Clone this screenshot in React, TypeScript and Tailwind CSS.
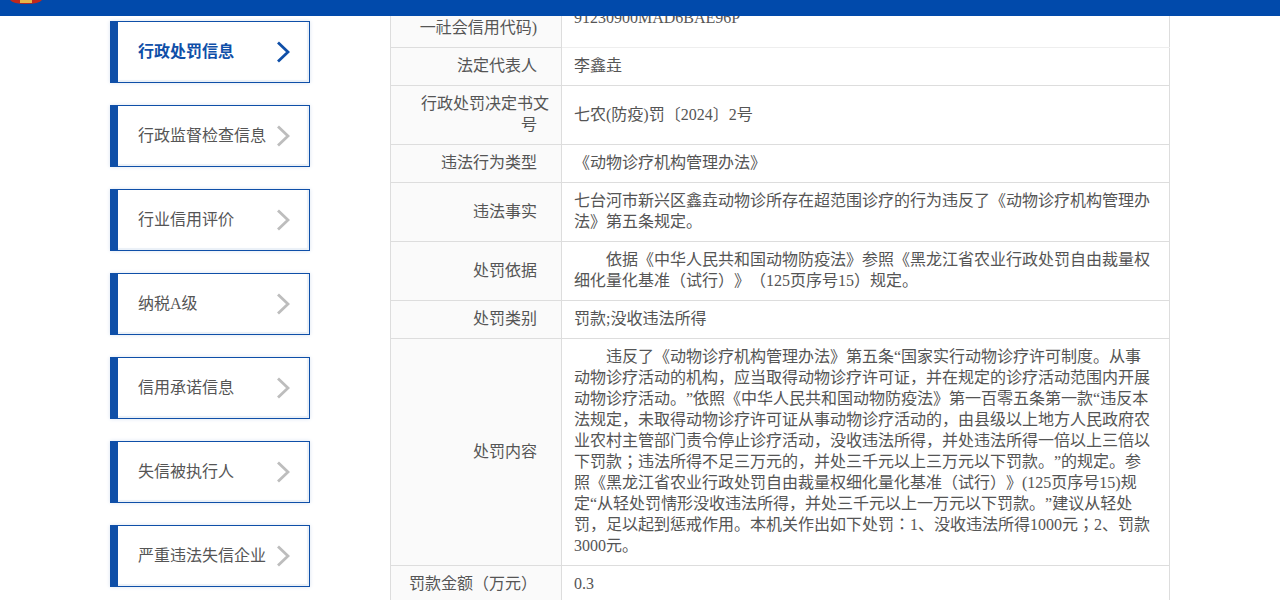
import React from "react";

const nav = ["行政处罚信息", "行政监督检查信息", "行业信用评价", "纳税A级", "信用承诺信息", "失信被执行人", "严重违法失信企业"];

const rows: [string, React.ReactNode][] = [
  ["行政相对人代码(统一社会信用代码)", "91230900MAD6BAE96P"],
  ["法定代表人", "李鑫垚"],
  ["行政处罚决定书文号", "七农(防疫)罚〔2024〕2号"],
  ["违法行为类型", "《动物诊疗机构管理办法》"],
  ["违法事实", "七台河市新兴区鑫垚动物诊所存在超范围诊疗的行为违反了《动物诊疗机构管理办法》第五条规定。"],
  ["处罚依据", <p className="indent-8">依据《中华人民共和国动物防疫法》参照《黑龙江省农业行政处罚自由裁量权细化量化基准（试行）》（125页序号15）规定。</p>],
  ["处罚类别", "罚款;没收违法所得"],
  ["处罚内容", <p className="indent-8">违反了《动物诊疗机构管理办法》第五条“国家实行动物诊疗许可制度。从事动物诊疗活动的机构，应当取得动物诊疗许可证，并在规定的诊疗活动范围内开展动物诊疗活动。”依照《中华人民共和国动物防疫法》第一百零五条第一款“违反本法规定，未取得动物诊疗许可证从事动物诊疗活动的，由县级以上地方人民政府农业农村主管部门责令停止诊疗活动，没收违法所得，并处违法所得一倍以上三倍以下罚款；违法所得不足三万元的，并处三千元以上三万元以下罚款。”的规定。参照《黑龙江省农业行政处罚自由裁量权细化量化基准（试行）》(125页序号15)规定“从轻处罚情形没收违法所得，并处三千元以上一万元以下罚款。”建议从轻处罚，足以起到惩戒作用。本机关作出如下处罚：1、没收违法所得1000元；2、罚款3000元。</p>],
  ["罚款金额（万元）", "0.3"],
];

function Chevron({ active }: { active: boolean }) {
  return (
    <svg width="14" height="22" viewBox="0 0 14 22" fill="none" className="shrink-0">
      <path d="M2 1.5 L12 11 L2 20.5" stroke={active ? "#0f4fa8" : "#bdbdbd"} strokeWidth="2.8" />
    </svg>
  );
}

export default function App() {
  return (
    <div className="relative h-[600px] w-[1280px] overflow-hidden bg-white font-['Liberation_Serif','Noto_Sans_CJK_KR',serif] text-base [text-spacing-trim:space-all]">
      <header className="absolute inset-x-0 top-0 z-10 h-4 overflow-hidden bg-[#014aab]">
        <svg width="40" height="4" viewBox="0 0 40 4" className="ml-2">
          <path d="M2 0 H34 Q31 4 18 4 Q5 4 2 0Z" fill="#c0281c" />
          <path d="M12 0 H24 V3 H12Z" fill="#e8b84a" />
        </svg>
      </header>
      <div className="flex">
        <nav className="ml-[110px] mt-[21px] flex w-[200px] flex-col gap-[22px]">
          {nav.map((t, i) => (
            <a key={t} className={`flex h-[62px] items-center justify-between border border-[#0f4fa8] border-l-8 pl-5 pr-[19px] shadow-[0_0_4px_#d9e3f0,inset_-2px_-2px_1px_#eaf0f7] ${i === 0 ? "font-bold text-[#0f4fa8]" : "text-[#555555]"}`}>
              <span>{t}</span>
              <Chevron active={i === 0} />
            </a>
          ))}
        </nav>
        <table className="ml-20 mt-[-12px] w-[780px] table-fixed border-collapse leading-[21px] text-[#555555]">
          <colgroup>
            <col className="w-[171px]" />
            <col />
          </colgroup>
          <tbody>
            {rows.map(([k, v], i) => (
              <tr key={k}>
                <th className="border border-[#dddddd] bg-[#fafafa] px-3 pb-[9px] pt-[7px] text-right font-normal">{k}{"\u00a0\u00a0\u00a0"}</th>
                <td className={`border border-[#dddddd] px-3 pb-[9px] pt-[7px] ${i === 0 ? "border-b-[#eeeeee]" : ""}`}>{v}</td>
              </tr>
            ))}
          </tbody>
        </table>
      </div>
    </div>
  );
}
